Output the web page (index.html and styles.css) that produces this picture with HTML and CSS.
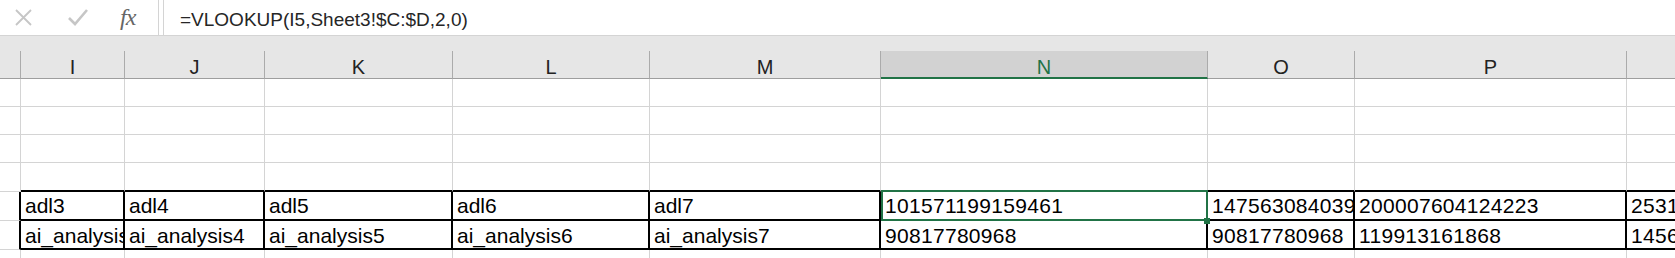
FILE: index.html
```html
<!DOCTYPE html>
<html lang="en">
<head>
  <meta charset="UTF-8">
  <title>Sheet</title>
  <link rel="stylesheet" href="styles.css">
</head>
<body>

  <!-- Formula bar -->
  <div class="formula-bar">
    <div class="fx-tools">
      <svg class="icon-cancel" width="17" height="17" viewBox="0 0 17 17">
        <path d="M1 1 L16 16 M16 1 L1 16" stroke="#c6c6c6" stroke-width="1.8" fill="none"/>
      </svg>
      <svg class="icon-enter" width="20" height="17" viewBox="0 0 20 17">
        <path d="M1 9 L7 15 L19 1" stroke="#c6c6c6" stroke-width="2.6" fill="none"/>
      </svg>
      <span class="fx">fx</span>
    </div>
    <div class="fx-input">=VLOOKUP(I5,Sheet3!$C:$D,2,0)</div>
  </div>

  <!-- Column headers -->
  <div class="col-band">
    <div class="col-headers">
      <div class="hd"></div>
      <div class="hd">I</div>
      <div class="hd">J</div>
      <div class="hd">K</div>
      <div class="hd">L</div>
      <div class="hd">M</div>
      <div class="hd selected">N</div>
      <div class="hd">O</div>
      <div class="hd">P</div>
      <div class="hd"></div>
    </div>
  </div>

  <!-- Cells -->
  <div class="sheet" id="sheet"></div>

  <script>
    const sheet = document.getElementById('sheet');
    const cols = 10;
    const data = [
      ['adl3', 'adl4', 'adl5', 'adl6', 'adl7', '101571199159461', '147563084039', '200007604124223', '253184710362277'],
      ['ai_analysis3', 'ai_analysis4', 'ai_analysis5', 'ai_analysis6', 'ai_analysis7', '90817780968', '90817780968', '119913161868', '145620935517']
    ];

    // empty rows above the table
    for (let r = 0; r < 4; r++) {
      for (let c = 0; c < cols; c++) {
        const cell = document.createElement('div');
        cell.className = 'cell';
        if (r === 3 && c > 0) cell.classList.add('above-table');
        sheet.appendChild(cell);
      }
    }

    // bordered rows
    data.forEach((row, r) => {
      const gutter = document.createElement('div');
      gutter.className = 'cell gutter row-' + r;
      sheet.appendChild(gutter);
      row.forEach((text, c) => {
        const cell = document.createElement('div');
        cell.className = 'cell boxed row-' + r;
        if (/^\d+$/.test(text)) cell.classList.add('num');
        if (r === 0 && c === 5) cell.classList.add('active');
        cell.textContent = text;
        sheet.appendChild(cell);
      });
    });

    // one row cut off at the bottom
    for (let c = 0; c < cols; c++) {
      const cell = document.createElement('div');
      cell.className = 'cell';
      sheet.appendChild(cell);
    }
  </script>

</body>
</html>
```

FILE: styles.css
```css
* {
  box-sizing: border-box;
  margin: 0;
  padding: 0;
}
html {
  overflow: hidden;
}
body {
  width: 1675px;
  height: 258px;
  overflow: hidden;
  background: #fff;
  font-family: "Liberation Sans", Arial, sans-serif;
  color: #000;
}
.formula-bar {
  display: flex;
  height: 36px;
  border-bottom: 1px solid #d4d4d4;
  background: #fff;
}
.fx-tools {
  display: flex;
  align-items: center;
  width: 159px;
  border-right: 1px solid #d4d4d4;
}
.icon-cancel {
  margin-left: 15px;
}
.icon-enter {
  margin-left: 36px;
}
.fx {
  margin-left: 32px;
  font-family: "Liberation Serif", "Times New Roman", serif;
  font-style: italic;
  font-size: 24px;
  color: #666;
  letter-spacing: -1px;
}
.fx-input {
  flex: 1;
  margin-left: 4px;
  border-left: 1px solid #d4d4d4;
  padding: 5px 0 0 16px;
  font-size: 19px;
  line-height: 30px;
  color: #262626;
  white-space: nowrap;
}
.col-band {
  background: #e6e6e6;
  padding-top: 15px;
}
.col-headers,
.sheet {
  display: grid;
  grid-template-columns: 21px 104px 140px 188px 197px 231px 327px 147px 272px 100px;
}
.hd {
  height: 28px;
  border-right: 1px solid #ababab;
  border-bottom: 1px solid #9e9e9e;
  text-align: center;
  font-size: 20px;
  line-height: 24px;
  padding-top: 4px;
  color: #222;
}
.hd.selected {
  background: #d2d2d2;
  color: #217346;
  border-bottom: 2px solid #217346;
}
.sheet {
  grid-template-rows: 28px 28px 28px 29px 29px 29px 28px;
}
.cell {
  position: relative;
  border-right: 1px solid #d4d4d4;
  border-bottom: 1px solid #d4d4d4;
  white-space: nowrap;
  overflow: hidden;
}
.cell.above-table {
  border-bottom: 2px solid #000;
}
.cell.gutter {
  border-right: 2px solid #000;
}
.cell.boxed {
  display: flex;
  align-items: flex-end;
  padding-left: 4px;
  font-size: 21px;
  line-height: 24px;
  border-right: 2px solid #000;
  border-bottom: 2px solid #000;
}
.cell.num {
  letter-spacing: 0.3px;
}
.cell.boxed.row-0 {
  padding-bottom: 1px;
}
.cell.active {
  overflow: visible;
}
.cell.active::after {
  content: "";
  position: absolute;
  left: 0;
  right: -2px;
  top: -2px;
  bottom: -2px;
  border: 2px solid #217346;
}
.cell.active::before {
  content: "";
  position: absolute;
  right: -4px;
  bottom: -5px;
  width: 6px;
  height: 6px;
  background: #217346;
  z-index: 1;
}
```
